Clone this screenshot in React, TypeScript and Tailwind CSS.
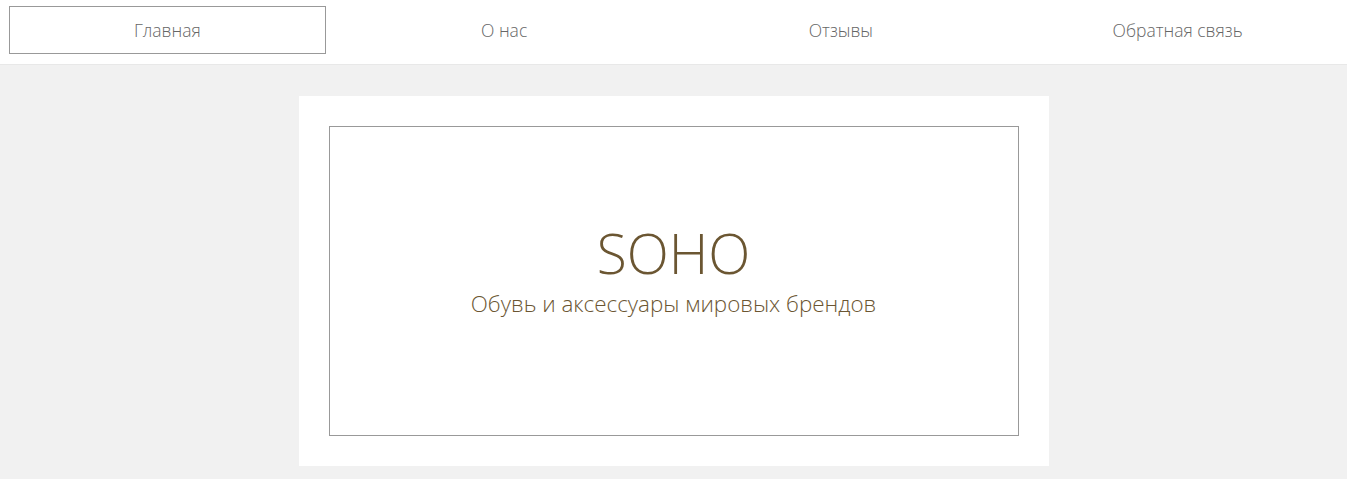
import React from 'react';

const NAV_ITEMS = [
    { id: 1, label: 'Главная', active: true },
    { id: 2, label: 'О нас', active: false },
    { id: 3, label: 'Отзывы', active: false },
    { id: 4, label: 'Обратная связь', active: false },
];

export default function App() {
    return (
        <div className="min-h-screen bg-[#f1f1f1] font-['Open_Sans',sans-serif] font-light">
            <nav className="bg-white h-[65px] border-b border-[#e8e8e8] grid grid-cols-4">
                {NAV_ITEMS.map((item) => (
                    <div key={item.id} className="pt-[6px] pl-[9px] pr-[11px]">
                        <a
                            href="#"
                            className={`h-[48px] pt-[1px] flex items-center justify-center text-[17.5px] text-[#666] border ${
                                item.active ? 'border-[#999]' : 'border-transparent'
                            }`}
                        >
                            {item.label}
                        </a>
                    </div>
                ))}
            </nav>

            <main className="pt-[31px] flex justify-center">
                <div className="bg-white w-[750px] h-[370px] p-[30px]">
                    <div className="h-full pb-[22px] border border-[#999] flex flex-col items-center justify-center text-[#6b5632]">
                        <h1 className="text-[55px] leading-none">SOHO</h1>
                        <p className="text-[22.4px] leading-none mt-[13px]">Обувь и аксессуары мировых брендов</p>
                    </div>
                </div>
            </main>
        </div>
    );
}
